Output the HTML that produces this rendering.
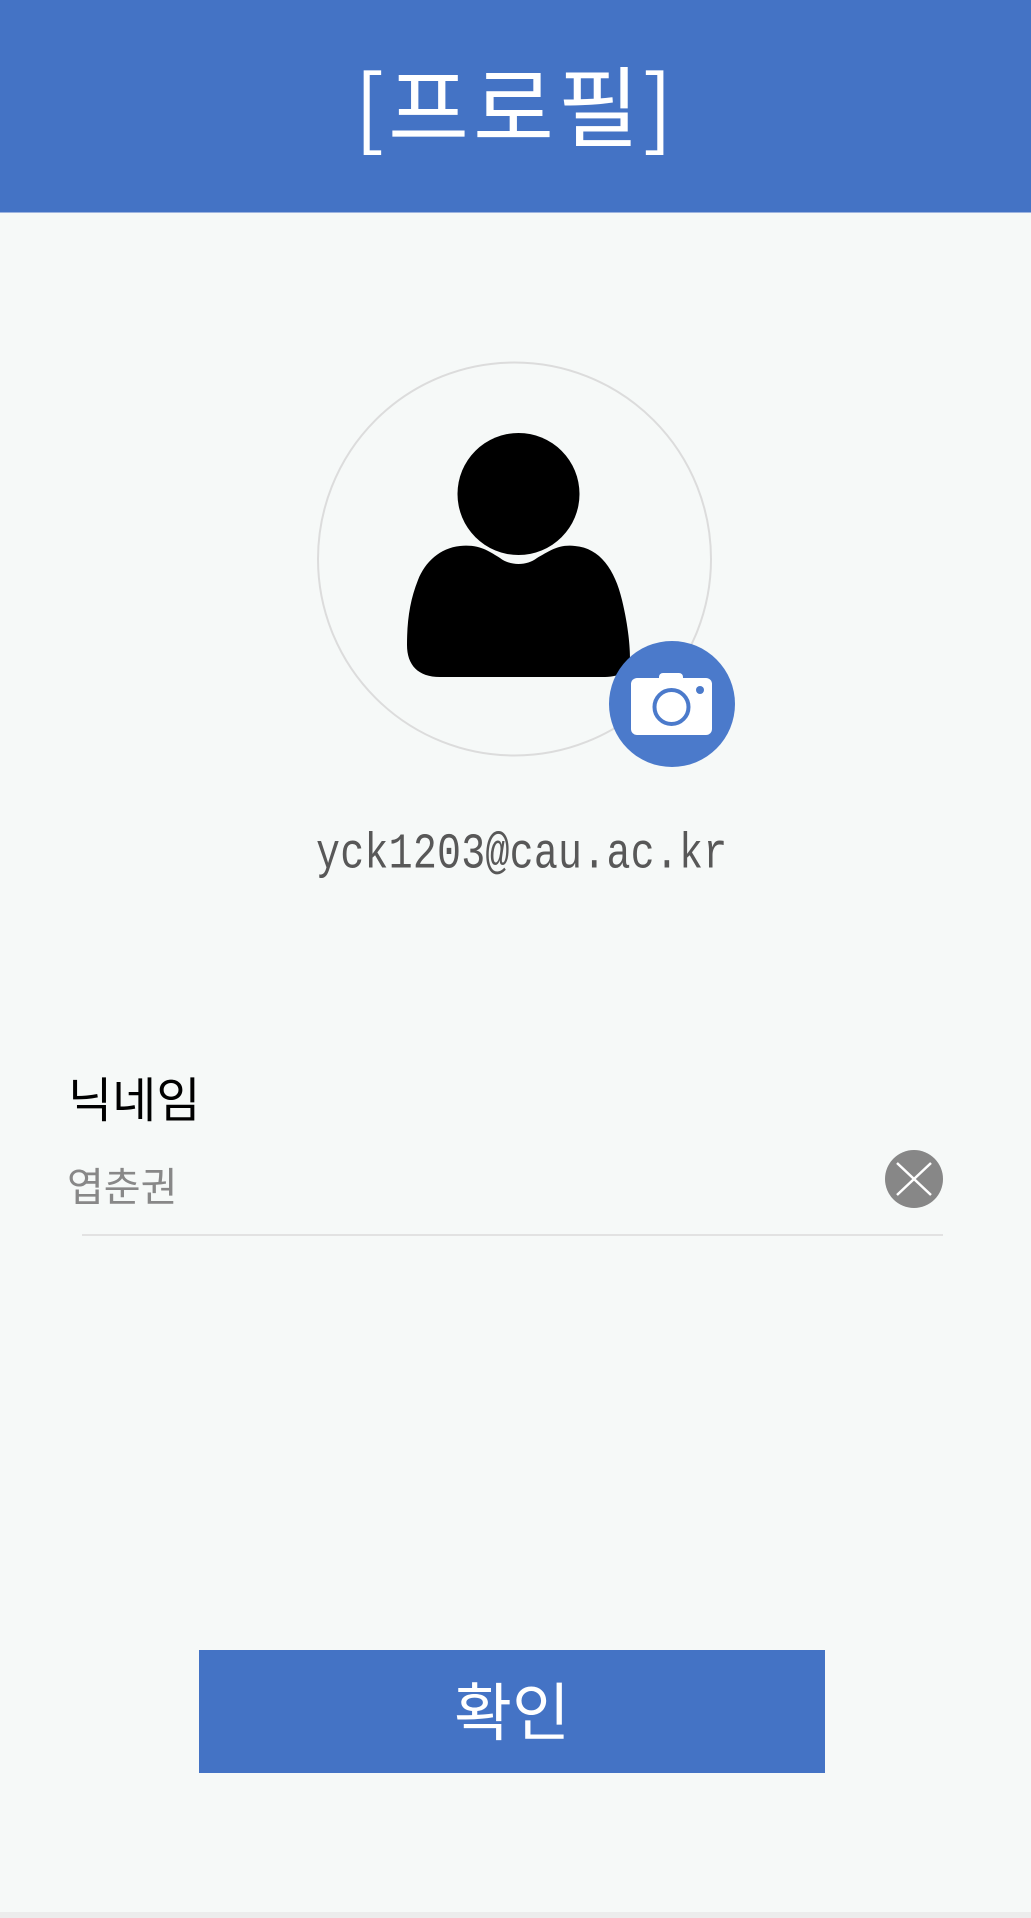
<!DOCTYPE html>
<html><head><meta charset="utf-8"><style>
html,body{margin:0;padding:0;}
body{width:1031px;height:1918px;background:#f6f9f8;position:relative;overflow:hidden;font-family:"Liberation Sans","Noto Sans CJK KR",sans-serif;}
.hdr{position:absolute;left:0;top:0;width:1031px;height:212px;background:#4473c5;border-bottom:1px solid #9db4e0;}
.title{position:absolute;left:0;width:1031px;top:48px;text-align:center;color:#fff;font-size:88px;line-height:110px;letter-spacing:4px;font-family:"Noto Sans CJK KR",sans-serif;}
.email{position:absolute;left:316px;top:826px;font-family:"Liberation Mono",monospace;font-size:40px;letter-spacing:0.2px;color:#585858;line-height:60px;transform:scaleY(1.25);transform-origin:0 50%;}
.lbl{position:absolute;left:68px;top:1062px;font-size:48px;line-height:68px;color:#000;font-family:"Noto Sans CJK KR",sans-serif;}
.val{position:absolute;left:67px;top:1155px;font-size:40px;line-height:58px;color:#888;font-family:"Noto Sans CJK KR",sans-serif;}
.line{position:absolute;left:82px;top:1234px;width:861px;height:2px;background:#e2e2e2;}
.btn{position:absolute;left:199px;top:1650px;width:626px;height:123px;background:#4473c5;color:#fff;text-align:center;font-size:63px;line-height:118px;font-family:"Noto Sans CJK KR",sans-serif;}
.bot{position:absolute;left:0;top:1912px;width:1031px;height:6px;background:#ececec;}
</style></head><body>
<div class="hdr"></div>
<div class="title">[프로필]</div>
<svg width="1031" height="800" style="position:absolute;left:0;top:0">
<circle cx="514.5" cy="559" r="196.5" fill="none" stroke="#dcdcdc" stroke-width="2"/>
<circle cx="518.5" cy="494" r="61" fill="#000"/>
<path d="M460 546 C480 544 490 552 500 558 C510 566 527 566 537 558 C548 552 558 544 575 546 C600 548 615 570 622 600 C628 625 630 645 630 660 C630 670 620 677 605 677 L440 677 C418 677 407 665 407 645 C407 620 410 600 418 580 C425 562 440 548 460 546 Z" fill="#000"/>
<circle cx="672" cy="704" r="63" fill="#4b7acb"/>
<rect x="631" y="678" width="81" height="57" rx="6" fill="#fff"/>
<rect x="659" y="673" width="24" height="10" rx="4" fill="#fff"/>
<circle cx="671.5" cy="707" r="17" fill="none" stroke="#4b7acb" stroke-width="4"/>
<circle cx="700" cy="690" r="4" fill="#4b7acb"/>
</svg>
<div class="email">yck1203@cau.ac.kr</div>
<div class="lbl">닉네임</div>
<div class="val">엽춘권</div>
<svg width="60" height="60" style="position:absolute;left:884px;top:1149px">
<circle cx="30" cy="30" r="29" fill="#878787"/>
<path d="M13 14 L47 46 M47 14 L13 46" stroke="#fff" stroke-width="2.5"/>
</svg>
<div class="line"></div>
<div class="btn">확인</div>
<div class="bot"></div>
</body></html>
